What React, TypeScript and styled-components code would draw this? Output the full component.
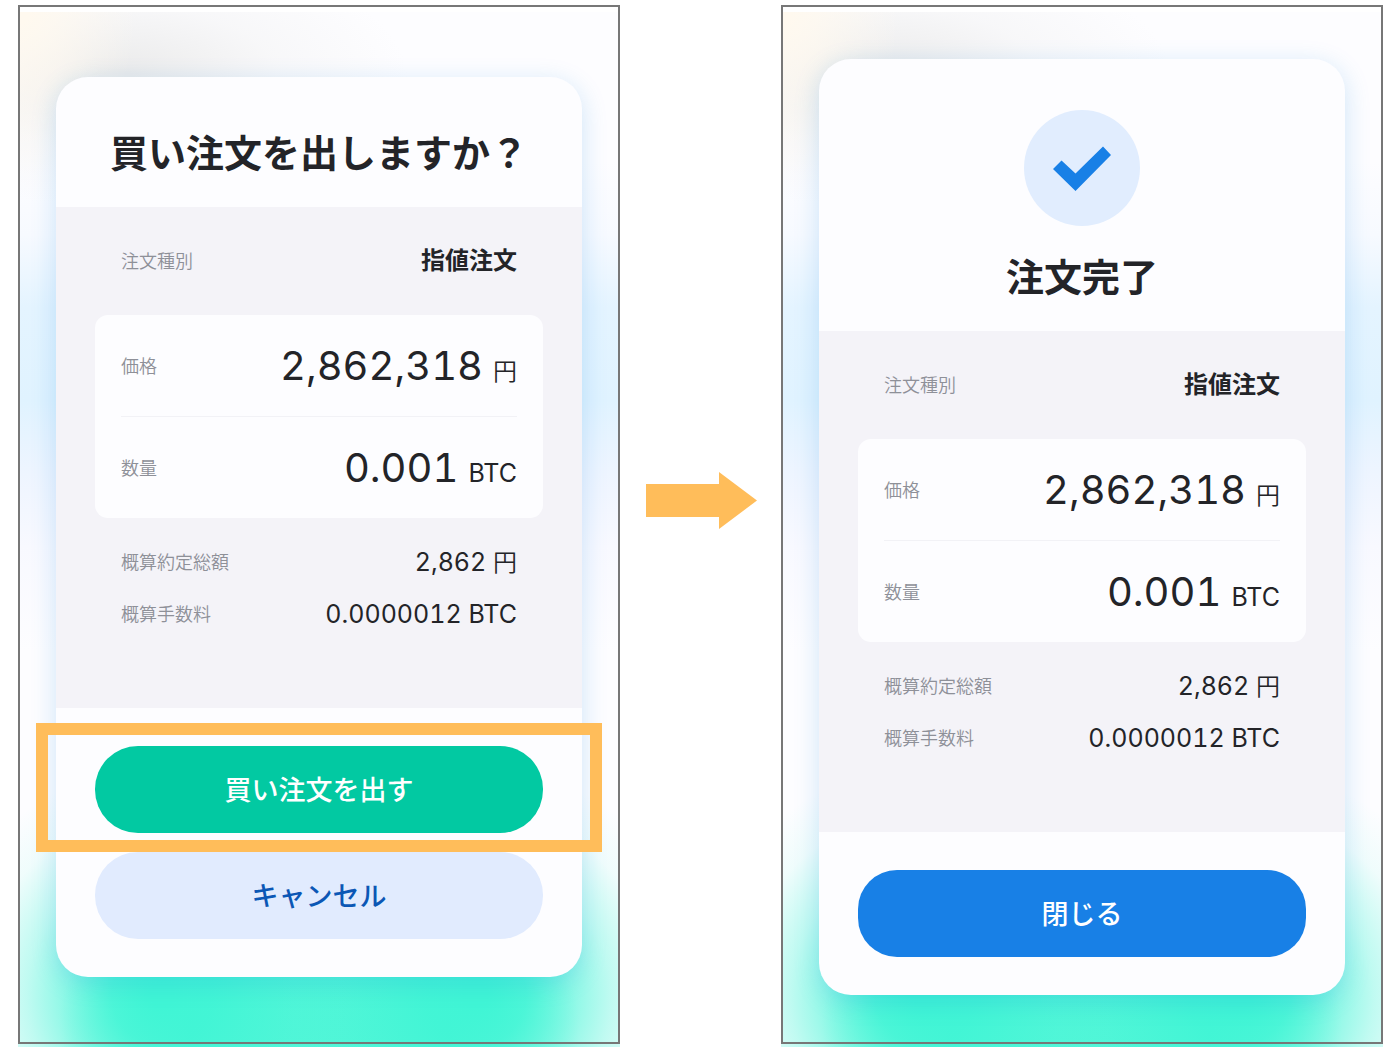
import React from "react";
import styled, { createGlobalStyle } from "styled-components";

const GlobalStyle = createGlobalStyle`
  *, *::before, *::after { box-sizing: border-box; }
  body {
    margin: 0;
    background: #ffffff;
    color: #232428;
    font-family: Inter, "Noto Sans CJK JP", sans-serif;
  }
`;

const Page = styled.main`
  display: grid;
  grid-template-columns: minmax(0, 1fr) 161px minmax(0, 1fr);
  min-height: 100vh;
  padding: 5px 12px 7px 18px;
`;

const glow = `
  rgba(64, 245, 213, 1) 5%,
  rgba(64, 245, 213, 0.9) 22%,
  rgba(64, 245, 213, 0.58) 43%,
  rgba(64, 245, 213, 0.32) 59%,
  rgba(64, 245, 213, 0.07) 80%,
  rgba(64, 245, 213, 0) 100%
`;

const Phone = styled.section`
  position: relative;
  display: flex;
  flex-direction: column;
  justify-content: center;
  padding: 7px 38px 5px;
  background-color: #fdfdff;
  background-image:
    linear-gradient(#ffffff 7px, transparent 7px),
    radial-gradient(230px 230px at 24% 95%, ${glow}),
    radial-gradient(230px 230px at 76% 95%, ${glow}),
    radial-gradient(260px 180px at 50% 98%, #58f6d9 50%, rgba(88, 246, 217, 0) 100%),
    radial-gradient(120px 170px at 0% 0%, #fff9ef 10%, rgba(255, 249, 239, 0) 100%),
    radial-gradient(290px 130px at 100px 72px, #ebebeb 5%, rgba(242, 242, 243, 0.5) 55%, rgba(250, 250, 252, 0) 100%),
    linear-gradient(
      rgba(253, 253, 255, 0) 15%,
      #f7faff 22%,
      #e4f4ff 29%,
      #e0f3ff 38%,
      #eef5ff 45%,
      #f8f9ff 52%,
      #fdfdff 62%
    );

  &::after {
    content: "";
    position: absolute;
    inset: 0 0 3px;
    border: 2px solid #777777;
    pointer-events: none;
  }
`;

const Card = styled.article`
  border-radius: 32px;
  background: #fdfdff;
  box-shadow: 0 6px 26px rgba(20, 130, 220, 0.2);
`;

const CardHeader = styled.header<{ $withIcon?: boolean }>`
  display: flex;
  flex-direction: column;
  align-items: center;
  gap: 22px;
  padding: ${(p) => (p.$withIcon ? "51px 24px 25px" : "47px 24px 25px")};
`;

const Title = styled.h1`
  margin: 0;
  font-size: 38px;
  font-weight: 700;
  line-height: 58px;
  white-space: nowrap;
`;

const Details = styled.dl`
  margin: 0;
  padding: 36px 39px 68px;
  background: #f4f3f8;
`;

const Row = styled.div<{ $height: number }>`
  display: flex;
  align-items: center;
  justify-content: space-between;
  height: ${(p) => p.$height}px;
  margin: 0 26px;
`;

const Panel = styled.div`
  margin: 36px 0 18px;
  border-radius: 13px;
  background: #fdfdff;

  ${Row} + ${Row} {
    border-top: 1px solid #f2f2f6;
  }
`;

const Label = styled.dt`
  padding-top: 2px;
  color: #8e9098;
  font-size: 18px;
  font-weight: 350;
  line-height: 28px;
`;

const Value = styled.dd<{ $kind?: "strong" | "amount" }>`
  margin: 0;
  padding-top: ${(p) => (p.$kind === "amount" ? 6 : 0)}px;
  font-size: ${(p) => (p.$kind === "strong" ? 24 : 25)}px;
  font-weight: ${(p) => (p.$kind === "strong" ? 700 : 400)};
  font-variant-numeric: tabular-nums;
  line-height: 36px;
  white-space: nowrap;
`;

const Amount = styled.span`
  margin-right: 10px;
  font-size: 40px;
`;

const Yen = styled.span`
  font-size: 24px;
  font-weight: 350;
`;

const Actions = styled.footer`
  display: flex;
  flex-direction: column;
  gap: 19px;
  padding: 38px 39px;
`;

const tones = {
  buy: { background: "#02c9a2", color: "#ffffff", radius: 43 },
  cancel: { background: "#e1ebfe", color: "#0b57b5", radius: 43 },
  close: { background: "#1880e6", color: "#ffffff", radius: 39 },
};

const Button = styled.button<{ $tone: keyof typeof tones }>`
  width: 100%;
  height: 87px;
  padding: 2px 0 0;
  border: 0;
  border-radius: ${(p) => tones[p.$tone].radius}px;
  background: ${(p) => tones[p.$tone].background};
  color: ${(p) => tones[p.$tone].color};
  font-family: inherit;
  font-size: 27px;
  font-weight: 500;
  line-height: 40px;
  cursor: pointer;
`;

const Highlight = styled.div`
  position: relative;

  &::after {
    content: "";
    position: absolute;
    inset: -23px -59px -19px;
    border: 12px solid #ffbd5a;
    pointer-events: none;
  }
`;

const ArrowColumn = styled.div`
  display: flex;
  align-items: center;
  justify-content: center;
  padding: 0 0 52px 2px;
`;

function StepArrow() {
  return (
    <ArrowColumn>
      <svg width="111" height="57" viewBox="0 0 111 57" aria-hidden="true">
        <path d="M0 12H73V0L111 28.5L73 57V45H0Z" fill="#ffbd5a" />
      </svg>
    </ArrowColumn>
  );
}

function CheckBadge() {
  return (
    <svg width="116" height="116" viewBox="0 0 116 116" aria-hidden="true">
      <circle cx="58" cy="58" r="58" fill="#e1edfe" />
      <path d="M29 59L37.500 50.500L51.500 63.500L79 36.500L87 45L51.500 81Z" fill="#1880e6" />
    </svg>
  );
}

function OrderDetails() {
  return (
    <Details>
      <Row $height={36}>
        <Label>注文種別</Label>
        <Value $kind="strong">指値注文</Value>
      </Row>
      <Panel>
        <Row $height={101}>
          <Label>価格</Label>
          <Value $kind="amount">
            <Amount>2,862,318</Amount>
            <Yen>円</Yen>
          </Value>
        </Row>
        <Row $height={102}>
          <Label>数量</Label>
          <Value $kind="amount">
            <Amount>0.001</Amount>
            BTC
          </Value>
        </Row>
      </Panel>
      <Row $height={52}>
        <Label>概算約定総額</Label>
        <Value>
          2,862 <Yen>円</Yen>
        </Value>
      </Row>
      <Row $height={52}>
        <Label>概算手数料</Label>
        <Value>0.0000012 BTC</Value>
      </Row>
    </Details>
  );
}

export default function App() {
  return (
    <>
      <GlobalStyle />
      <Page lang="ja">
        <Phone>
          <Card>
            <CardHeader>
              <Title>買い注文を出しますか？</Title>
            </CardHeader>
            <OrderDetails />
            <Actions>
              <Highlight>
                <Button type="button" $tone="buy">買い注文を出す</Button>
              </Highlight>
              <Button type="button" $tone="cancel">キャンセル</Button>
            </Actions>
          </Card>
        </Phone>
        <StepArrow />
        <Phone>
          <Card>
            <CardHeader $withIcon>
              <CheckBadge />
              <Title>注文完了</Title>
            </CardHeader>
            <OrderDetails />
            <Actions>
              <Button type="button" $tone="close">閉じる</Button>
            </Actions>
          </Card>
        </Phone>
      </Page>
    </>
  );
}
